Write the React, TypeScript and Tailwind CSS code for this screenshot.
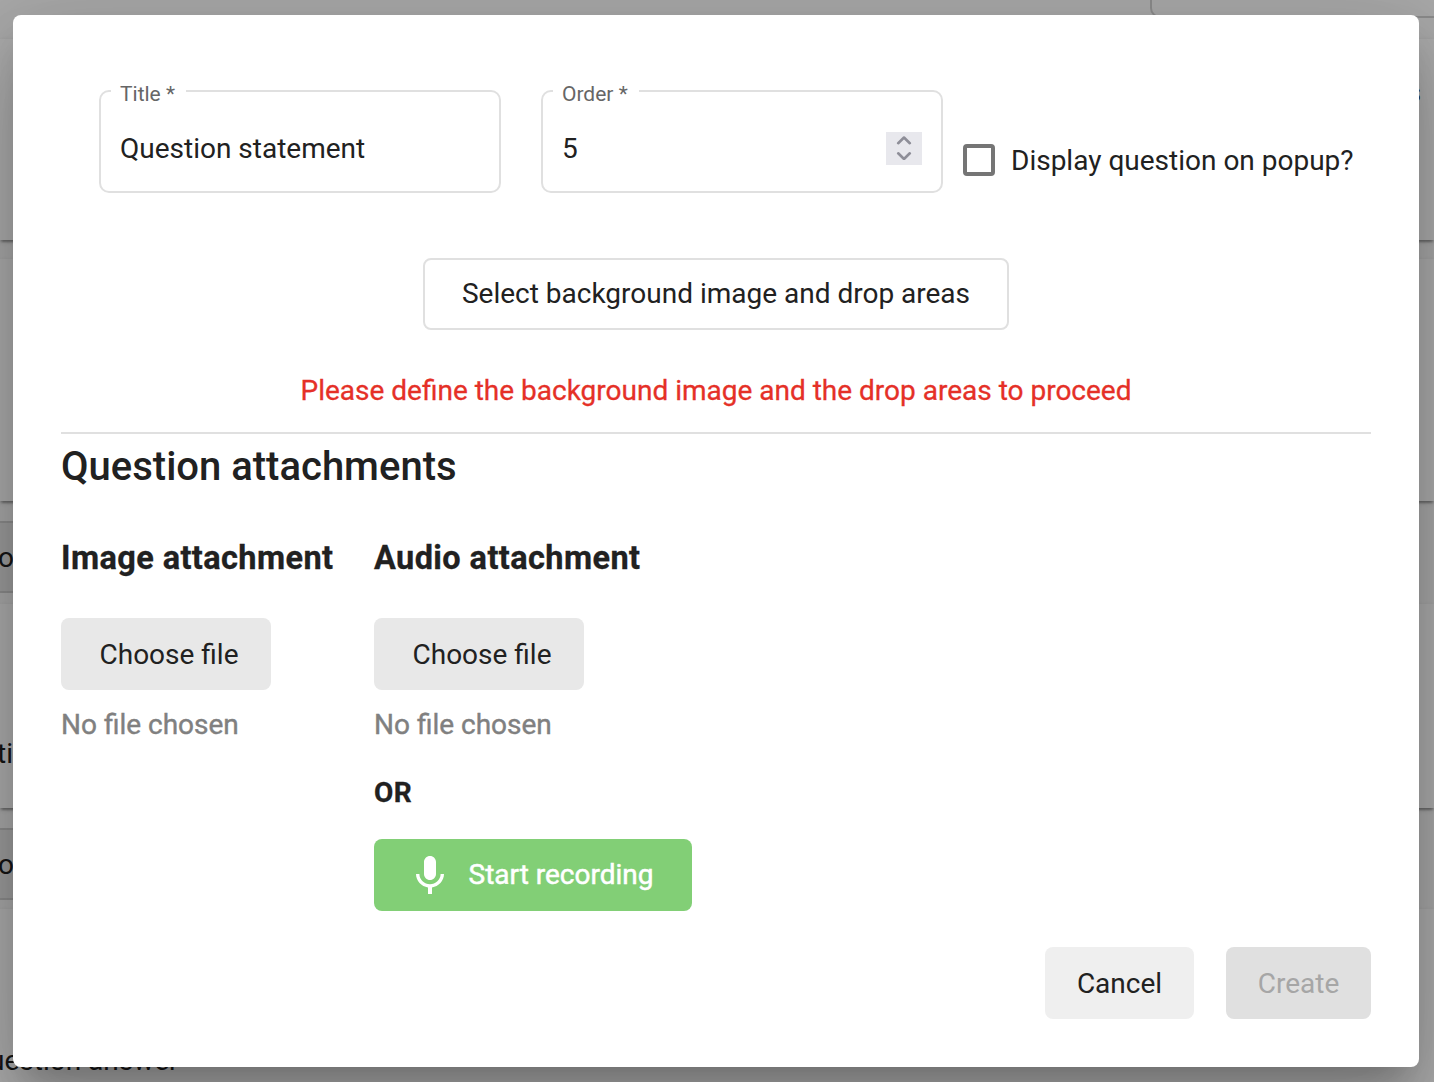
import type { ReactNode } from "react";

function Field({ label, gap, children }: { label: string; gap: string; children: ReactNode }) {
  return (
    <div className="relative flex h-[103px] w-[402px] items-center rounded-[10px] border-2 border-[#e0e0e0] px-[19px]">
      <span className={`absolute -top-[12px] left-[10px] h-7 bg-white pl-[9px] text-[21px] leading-7 text-[#666] ${gap}`}>
        {label}
      </span>
      <div className="flex w-full items-center justify-between pt-[13px]">{children}</div>
    </div>
  );
}

function FilePicker({ title }: { title: string }) {
  return (
    <>
      <h3 className="text-[32.5px] leading-10 font-bold tracking-[0.4px] whitespace-nowrap [-webkit-text-stroke:0.3px]">{title}</h3>
      <button className="mt-[40px] block h-[72px] w-[210px] rounded-lg bg-[#e8e8e8] pt-[2px] pl-[6px]">Choose file</button>
      <p className="mt-[15px] leading-10 text-[#808080] [-webkit-text-stroke:0.4px]">No file chosen</p>
    </>
  );
}

function Card({ size, children }: { size: string; children?: ReactNode }) {
  return (
    <div className={`shrink-0 bg-white shadow-[0_4px_2px_-2px_rgba(0,0,0,.2),0_2px_2px_0_rgba(0,0,0,.14),0_2px_6px_0_rgba(0,0,0,.12)] ${size}`}>
      {children}
    </div>
  );
}

function PageBehind() {
  return (
    <div className="flex h-full flex-col overflow-hidden whitespace-nowrap bg-[#fafafa]">
      <div className="flex h-[39px] shrink-0 justify-end overflow-hidden">
        <div className="h-[18px] w-[401px] translate-x-[117px] rounded-bl-[10px] border-b-2 border-l-2 border-[#cfcfcf]" />
      </div>
      <Card size="h-[201px]">
        <div className="flex justify-end pt-[36px] pr-[13px] text-[28px] leading-9 font-medium">Questions</div>
      </Card>
      <div className="h-[19px] shrink-0" />
      <Card size="h-[242px]" />
      <div className="flex h-[103px] shrink-0 pt-[20px]">
        <div className="flex h-[72px] w-[100px] items-center border-y-2 border-[#cfcfcf] bg-[#e8e8e8] pt-px">
          <span className="-ml-[2px]">o</span>
        </div>
      </div>
      <Card size="h-[204px]">
        <div className="-ml-[3px] pt-[132px] leading-9">tio</div>
      </Card>
      <div className="flex h-[101px] shrink-0 pt-[20px]">
        <div className="flex h-[72px] w-[100px] items-center border-y-2 border-[#cfcfcf] bg-[#e8e8e8] pt-px">
          <span className="-ml-[2px]">o</span>
        </div>
      </div>
      <Card size="h-[300px]">
        <div className="-ml-[11px] pt-[134px] leading-9">uestion answer</div>
      </Card>
    </div>
  );
}

export default function App() {
  return (
    <div className="relative h-[1082px] w-[1434px] overflow-hidden font-['Roboto',sans-serif] text-[28px] text-[#212121]">
      <PageBehind />
      <div className="absolute inset-0 bg-black/[.32] pt-[15px] pl-[13px]">
        <div className="flex h-[1052px] w-[1406px] flex-col rounded-lg bg-white px-12 pt-[75px] shadow-[0_22px_30px_-14px_rgba(0,0,0,.2),0_48px_76px_6px_rgba(0,0,0,.14),0_18px_92px_16px_rgba(0,0,0,.12)]">
          <div className="flex pl-[38px]">
            <Field label="Title *" gap="w-[75px]">
              <span className="pt-[2px]">Question statement</span>
            </Field>
            <div className="w-10" />
            <Field label="Order *" gap="w-[86px]">
              <span className="pt-[2px]">5</span>
              <span className="flex h-[33px] w-9 items-center justify-center bg-[#e8e8ed]">
                <svg width="16" height="24" viewBox="0 0 16 24" fill="none" stroke="#8e8e98" strokeWidth="2.6" strokeLinecap="round" strokeLinejoin="round">
                  <path d="M2.200 7.200 8 1.500l5.800 5.700M2.200 17.300 8 23l5.800-5.700" />
                </svg>
              </span>
            </Field>
            <div className="flex items-center gap-4 pt-[37px] pl-5">
              <span className="h-8 w-8 rounded border-4 border-[#757575]" />
              <span className="pt-[2px] whitespace-nowrap">Display question on popup?</span>
            </div>
          </div>
          <button className="mt-[65px] h-[72px] w-[586px] self-center rounded-lg border-2 border-[#e0e0e0]">
            Select background image and drop areas
          </button>
          <p className="mt-[41px] text-center leading-10 text-[#e53027] [-webkit-text-stroke:0.3px]">
            Please define the background image and the drop areas to proceed
          </p>
          <hr className="mt-[21px] border-t-2 border-[#e0e0e0]" />
          <h2 className="mt-[9px] text-[40px] leading-[48px] font-medium">Question attachments</h2>
          <div className="mt-[47px] flex">
            <div className="w-[313px]">
              <FilePicker title="Image attachment" />
            </div>
            <div>
              <FilePicker title="Audio attachment" />
              <p className="mt-[28px] leading-10 font-bold tracking-[0.5px] [-webkit-text-stroke:0.3px]">OR</p>
              <button className="mt-[26px] flex h-[72px] w-[318px] items-center rounded-lg bg-[#82cf76] pl-[32px] text-white">
                <svg width="48" height="48" viewBox="0 0 24 24" fill="currentColor">
                  <path d="M12 14.5c1.66 0 3-1.34 3-3V5.5c0-1.66-1.34-3-3-3S9 3.840 9 5.500v6c0 1.660 1.340 3 3 3zM17.300 11.500c0 3-2.540 5.100-5.300 5.100S6.700 14.500 6.700 11.500H5c0 3.410 2.720 6.230 6 6.720V21.500h2v-3.280c3.280-.480 6-3.300 6-6.720h-1.700z" />
                </svg>
                <span className="ml-[14.5px] [-webkit-text-stroke:0.5px]">Start recording</span>
              </button>
            </div>
          </div>
          <div className="mt-[36px] flex justify-end gap-8">
            <button className="h-[72px] w-[149px] rounded-lg bg-[#efefef] pt-[2px]">Cancel</button>
            <button className="h-[72px] w-[145px] rounded-lg bg-[#e0e0e0] pt-[2px] text-[#a6a6a6]">Create</button>
          </div>
        </div>
      </div>
    </div>
  );
}
